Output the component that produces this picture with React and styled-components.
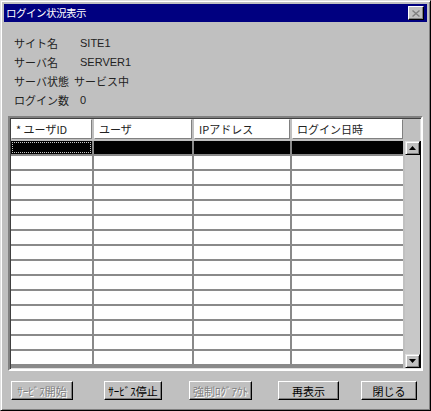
import React from 'react';
import styled, { createGlobalStyle } from 'styled-components';

const GlobalStyle = createGlobalStyle`
  html, body {
    margin: 0;
    padding: 0;
    background: #c0c0c0;
  }
  body {
    font-family: "Noto Sans CJK JP", "DejaVu Sans", sans-serif;
  }
`;

const Frame = styled.div`
  width: 431px;
  height: 411px;
  box-sizing: border-box;
  background: #c0c0c0;
  border: 1px solid;
  border-color: #dfdfdf #000 #000 #dfdfdf;
  box-shadow: inset 1px 1px 0 #fff, inset -1px -1px 0 #808080;
  padding: 3px;
  display: flex;
  flex-direction: column;
`;

const TitleBar = styled.div`
  height: 18px;
  background: #000080;
  display: flex;
  align-items: center;
  justify-content: space-between;
  padding: 0 3px 0 2px;
`;

const TitleText = styled.span`
  color: #fff;
  font-size: 10.5px;
  letter-spacing: -0.5px;
  line-height: 18px;
`;

const CloseButton = styled.div`
  width: 16px;
  height: 14px;
  box-sizing: border-box;
  background: #c0c0c0;
  border: 1px solid;
  border-color: #fff #000 #000 #fff;
  box-shadow: inset -1px -1px 0 #808080;
  display: flex;
  align-items: center;
  justify-content: center;
`;

const Info = styled.div`
  display: grid;
  grid-template-columns: 60px auto;
  grid-auto-rows: 19px;
  align-items: center;
  padding: 11px 0 0 10px;
  font-size: 11px;
  color: #222;
`;

const Value = styled.span`
  font-family: ${(p) => (p.$ascii ? '"Liberation Sans", Arial, sans-serif' : '"Noto Sans CJK JP", sans-serif')};
  padding-left: ${(p) => (p.$ascii ? '6px' : '0')};
`;

const Table = styled.div`
  margin: 7px 0 0 4px;
  width: 415px;
  box-sizing: border-box;
  border: 2px solid;
  border-color: #808080 #fff #fff #808080;
  box-shadow: inset 1px 1px 0 #404040, inset -1px -1px 0 #dfdfdf;
  padding: 1px;
  display: grid;
  grid-template-columns: 81px 98px 96px 111px 15px;
  column-gap: 2px;
  row-gap: 2px;
  grid-template-rows: 20px 227px;
`;

const HeadCell = styled.div`
  background: #fff;
  box-sizing: border-box;
  border: 1px solid;
  border-color: #fff #808080 #808080 #fff;
  font-size: 11px;
  line-height: 18px;
  padding-left: 4px;
  color: #222;
  white-space: nowrap;
`;

const Body = styled.div`
  grid-column: 1 / span 4;
  display: grid;
  grid-template-columns: 81px 98px 96px 111px;
  grid-auto-rows: 13px;
  gap: 2px;
  overflow: hidden;
  background: #8a8a8a;
  align-content: start;
`;

const Cell = styled.div`
  background: ${(p) => (p.$selected ? '#000' : '#fff')};
  position: relative;
`;

const Focus = styled.div`
  position: absolute;
  inset: 1px;
  border: 1px dotted #c8c8c8;
`;

const ScrollBar = styled.div`
  display: flex;
  flex-direction: column;
  justify-content: space-between;
  background: #c8c8c8;
  border-right: 1px solid #000;
  margin-right: -1px;
`;

const ScrollButton = styled.div`
  height: 14px;
  box-sizing: border-box;
  background: #c0c0c0;
  border: 1px solid;
  border-color: #dfdfdf #000 #000 #dfdfdf;
  box-shadow: inset 1px 1px 0 #fff, inset -1px -1px 0 #808080;
  display: flex;
  align-items: center;
  justify-content: center;
`;

const ButtonRow = styled.div`
  display: flex;
  margin-top: 10px;
  padding-left: 7px;
`;

const Button = styled.div`
  width: ${(p) => p.$w}px;
  margin-left: ${(p) => p.$ml}px;
  height: 19px;
  box-sizing: border-box;
  background: #c0c0c0;
  border: 1px solid;
  border-color: #fff #000 #000 #fff;
  box-shadow: inset -1px -1px 0 #808080;
  display: flex;
  align-items: center;
  justify-content: center;
  font-size: 11px;
  color: ${(p) => (p.$disabled ? '#808080' : '#000')};
  text-shadow: ${(p) => (p.$disabled ? '1px 1px 0 #fff' : 'none')};
  white-space: nowrap;
`;

const info = [
  ['サイト名', 'SITE1', true],
  ['サーバ名', 'SERVER1', true],
  ['サーバ状態', 'サービス中', false],
  ['ログイン数', '0', true],
];

const headers = ['* ユーザID', 'ユーザ', 'IPアドレス', 'ログイン日時'];

const buttons = [
  { label: 'ｻｰﾋﾞｽ開始', w: 62, ml: 0, disabled: true },
  { label: 'ｻｰﾋﾞｽ停止', w: 58, ml: 31 },
  { label: '強制ﾛｸﾞｱｳﾄ', w: 63, ml: 27, disabled: true },
  { label: '再表示', w: 61, ml: 26 },
  { label: '閉じる', w: 56, ml: 22 },
];

const Arrow = ({ down }) => (
  <svg width="7" height="4" viewBox="0 0 7 4">
    <path d={down ? 'M0 0h7L3.5 4z' : 'M3.5 0L7 4H0z'} fill="#000" />
  </svg>
);

export default function App() {
  const rows = Array.from({ length: 15 }, (_, i) => i);
  return (
    <>
      <GlobalStyle />
      <Frame>
        <TitleBar>
          <TitleText>ログイン状況表示</TitleText>
          <CloseButton>
            <svg width="8" height="7" viewBox="0 0 8 7">
              <path d="M0.5 0.5L7.5 6.5M7.5 0.5L0.5 6.5" stroke="#808080" strokeWidth="1.4" />
            </svg>
          </CloseButton>
        </TitleBar>
        <Info>
          {info.map(([label, value, ascii]) => (
            <React.Fragment key={label}>
              <span>{label}</span>
              <Value $ascii={ascii}>{value}</Value>
            </React.Fragment>
          ))}
        </Info>
        <Table>
          {headers.map((h) => (
            <HeadCell key={h}>{h}</HeadCell>
          ))}
          <div />
          <Body>
            {rows.map((r) =>
              headers.map((h, c) => (
                <Cell key={`${r}-${c}`} $selected={r === 0}>
                  {r === 0 && c === 0 && <Focus />}
                </Cell>
              ))
            )}
          </Body>
          <ScrollBar>
            <ScrollButton>
              <Arrow />
            </ScrollButton>
            <ScrollButton>
              <Arrow down />
            </ScrollButton>
          </ScrollBar>
        </Table>
        <ButtonRow>
          {buttons.map((b) => (
            <Button key={b.label} $w={b.w} $ml={b.ml} $disabled={b.disabled}>
              {b.label}
            </Button>
          ))}
        </ButtonRow>
      </Frame>
    </>
  );
}
